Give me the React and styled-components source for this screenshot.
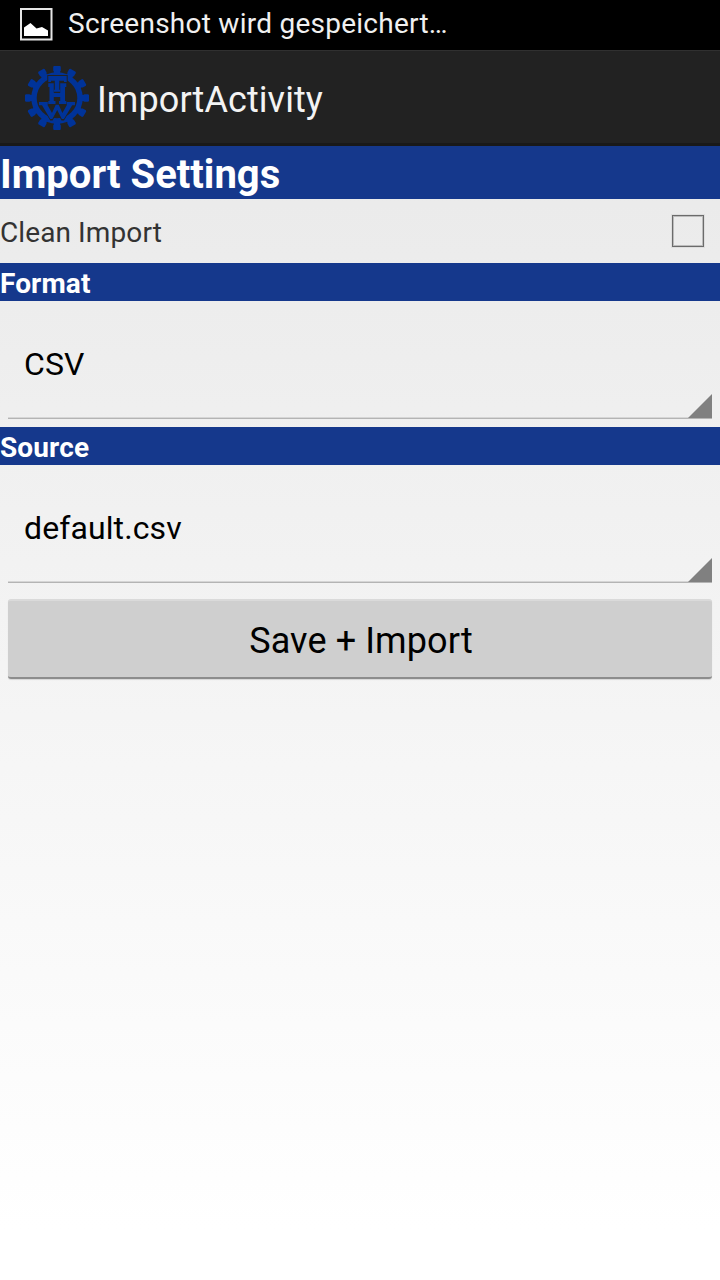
import React from 'react';
import styled, { createGlobalStyle } from 'styled-components';

const GlobalStyle = createGlobalStyle`
  * { box-sizing: border-box; }
  body {
    margin: 0;
    font-family: Roboto, 'Liberation Sans', sans-serif;
  }
`;

const Screen = styled.div`
  display: flex;
  flex-direction: column;
  width: 720px;
  height: 1280px;
  overflow: hidden;
  background: linear-gradient(#e8e8e8, #eeeeee 26%, #ffffff) 0 50px / 100% 1180px no-repeat #fff;
`;

const StatusBar = styled.div`
  display: flex;
  align-items: center;
  flex: none;
  height: 50px;
  padding: 0 0 3px 20px;
  gap: 15px;
  background: #000;
  color: #f0f0f0;
  font-size: 28px;
  letter-spacing: 0.25px;
  white-space: nowrap;
`;

const StatusIcon = styled.svg`
  margin-top: 2px;
`;

const ActionBar = styled.header`
  display: flex;
  align-items: center;
  flex: none;
  height: 96px;
  padding: 1px 0 0 25px;
  gap: 8px;
  border-top: 1px solid #303030;
  border-bottom: 3px solid #191919;
  background: #222;
  color: #f3f3f3;
`;

const Title = styled.h1`
  margin: 0;
  padding-top: 4px;
  font-size: 36px;
  font-weight: 400;
  line-height: 42px;
  letter-spacing: 0.08px;
`;

const Heading = styled.h2`
  flex: none;
  margin: 0;
  height: ${(p) => (p.$large ? 53 : 38)}px;
  background: #15388c;
  color: #fff;
  font-size: ${(p) => (p.$large ? 40 : 28)}px;
  font-weight: 700;
  line-height: ${(p) => (p.$large ? 58 : 41)}px;
  letter-spacing: ${(p) => (p.$large ? 0 : 0.12)}px;
`;

const Row = styled.label`
  display: flex;
  align-items: center;
  justify-content: space-between;
  flex: none;
  height: 64px;
  padding-right: 16px;
  color: #333;
  font-size: 28px;
  letter-spacing: 0.1px;
`;

const RowText = styled.span`
  padding-top: 3px;
`;

const CheckBox = styled.span`
  width: 32px;
  height: 32px;
  border: 1px solid #6b6b6b;
  box-shadow: 0 0 0 1px #dedede, inset 0 0 0 1px #bcbcbc;
`;

const Spinner = styled.div`
  display: flex;
  align-items: flex-end;
  justify-content: space-between;
  flex: none;
  height: 118px;
  margin: 0 8px 8px;
  border-bottom: 1px solid #b4b4b4;
  box-shadow: inset 0 -1px #d6d6d6;
  color: #000;
  font-size: 32px;
  letter-spacing: 0.1px;
`;

const SpinnerText = styled.span`
  align-self: center;
  padding: 8px 0 0 16px;
`;

const Corner = styled.svg`
  display: block;
`;

const Button = styled.button`
  flex: none;
  height: 80px;
  margin: 8px 8px 0;
  padding: 3px 0 0 2px;
  border: 0;
  border-top: 2px solid #dadada;
  border-bottom: 2px solid #8d8d8d;
  border-radius: 3px;
  background: #cfcfcf;
  box-shadow: 0 1px 1px #d8d8d8;
  color: #000;
  font-family: inherit;
  font-size: 36px;
  letter-spacing: 0.1px;
`;

const TEETH = Array.from({ length: 12 }, (_, i) => i * 30);

function PictureIcon() {
  return (
    <StatusIcon width="33" height="33" viewBox="0 0 33 33">
      <rect x="1" y="1" width="30.5" height="30.5" fill="none" stroke="#e6e6e6" strokeWidth="2" />
      <path d="M4 28V19.5L10.5 15L16.5 20.5L22 19L28 22.5V28Z" fill="#fff" />
    </StatusIcon>
  );
}

function GearLogo() {
  return (
    <svg width="64" height="64" viewBox="0 0 64 64" fill="#003399">
      <circle cx="32" cy="32" r="23" fill="none" stroke="#003399" strokeWidth="5.4" />
      {TEETH.map((angle) => (
        <path key={angle} d="M27.5 10L29 6L28.2 4.5V0.8L29 0H35L35.8 0.8V4.5L35 6L36.5 10Z" transform={`rotate(${angle} 32 32)`} />
      ))}
      <path d="M22.3 9H42.7V17H22.3Z" fill="#222" />
      <path d="M16 39L25.2 54.5H27.6L32 46.5L36.5 54.5H39L48.2 39L45 36H19Z" fill="#222" />
      <path d="M23.3 17.3H28.8V27H35.2V17.3H41.3V21H40V35H41.3V38H34V35H35.2V31H28.8V35H30.5V38H23.3V35H24.5V21H23.3Z" />
      <path d="M23.3 10H41.7V16H39V14.7H34.3V23.8H35V25.8H29V23.8H29.8V14.7H26V16H23.3Z" />
      <path d="M14 36H22.8V38.8H22.4L27 47L30.7 38.8H33.7L37.4 47L42 38.8H41.7V36H50V39.2H47.2L39 53H36.8L32.2 44L27.4 53H25.2L17 39.2H14Z" />
    </svg>
  );
}

function SelectField({ value }) {
  return (
    <Spinner>
      <SpinnerText>{value}</SpinnerText>
      <Corner width="24" height="24" viewBox="0 0 24 24">
        <path d="M0 24L24 0V24Z" fill="#808080" />
      </Corner>
    </Spinner>
  );
}

export default function App() {
  return (
    <>
      <GlobalStyle />
      <Screen>
        <StatusBar>
          <PictureIcon />
          <span>Screenshot wird gespeichert…</span>
        </StatusBar>
        <ActionBar>
          <GearLogo />
          <Title>ImportActivity</Title>
        </ActionBar>
        <Heading $large>Import Settings</Heading>
        <Row>
          <RowText>Clean Import</RowText>
          <CheckBox />
        </Row>
        <Heading>Format</Heading>
        <SelectField value="CSV" />
        <Heading>Source</Heading>
        <SelectField value="default.csv" />
        <Button type="button">Save + Import</Button>
      </Screen>
    </>
  );
}
